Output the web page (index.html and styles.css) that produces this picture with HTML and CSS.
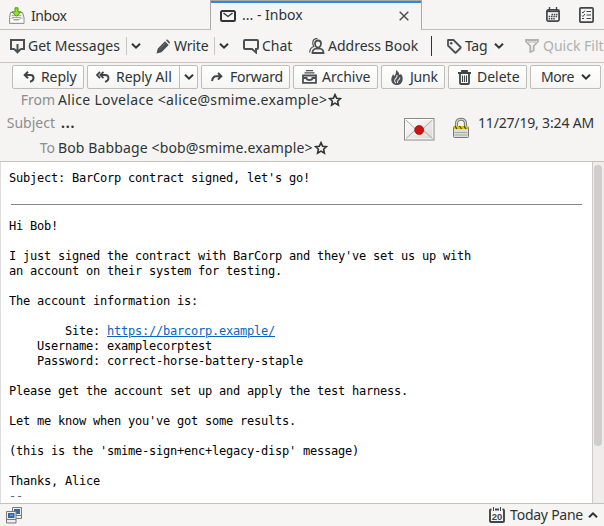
FILE: index.html
```
<!DOCTYPE html>
<html lang="en">
<head>
<meta charset="utf-8">
<title>... - Inbox</title>
<link rel="stylesheet" href="styles.css">
</head>
<body>
<svg class="defs" width="0" height="0">
  <symbol id="chev" viewBox="0 0 10 8"><path d="M1 1.7 5 5.7 9 1.7" fill="none" stroke="#2e3436" stroke-width="2"/></symbol>
  <symbol id="star" viewBox="0 0 14 14"><path d="M7 1.7 8.6 5.2 12.5 5.6 9.6 8.2 10.4 12.1 7 10.1 3.6 12.1 4.4 8.2 1.5 5.6 5.4 5.2Z" fill="none" stroke="#2e3436" stroke-width="1.6"/></symbol>
</svg>
<div class="app">
  <div class="tabs">
    <div class="tab first">
      <svg width="18" height="18" viewBox="0 0 18 18"><path d="M2.500 5.500h12l1.500 5v6H1.500v-6z" fill="#eeeeec" stroke="#888a85"/><path d="M4 8.500h9M4 10.500h9M5 12.500h7" stroke="#a5a7a2"/><path d="M2 11.500h3l1 2h5l1-2h3.500V16H2z" fill="#fff" stroke="#babdb6" stroke-width=".6"/><path d="M7 .8h3v4h3L8.500 9.300 4 4.800h3z" fill="#8ae234" stroke="#4e9a06"/></svg>
      <span>Inbox</span>
    </div>
    <div class="tab active">
      <svg width="16" height="12" viewBox="0 0 16 12"><rect x="1" y="1" width="14" height="10" rx="1.5" fill="none" stroke="#2e3436" stroke-width="2"/><path d="M3.5 3 8 6.5 12.5 3" fill="none" stroke="#2e3436" stroke-width="1.3"/></svg>
      <span>... - Inbox</span>
      <svg class="close" width="10" height="10" viewBox="0 0 10 10"><path d="M.7.7l8.6 8.6M9.3.7.7 9.3" stroke="#4a5053" stroke-width="1.5"/></svg>
    </div>
    <div class="tab-tools">
      <svg width="14" height="15" viewBox="0 0 14 15"><path d="M3.5 0v4M10.500 0v4" stroke="#3f4548" stroke-width="1.3"/><rect x=".9" y="2.800" width="12.200" height="11.300" rx="1.500" fill="none" stroke="#3f4548" stroke-width="1.700"/><path d="M1 4.500h12" stroke="#3f4548" stroke-width="1.300"/><path d="M5.500 7.500h6M2.700 9.600h8.800M2.700 11.700h6.500" stroke="#3f4548" stroke-width="1.500" stroke-dasharray="1.500 .8"/></svg>
      <svg width="15" height="16" viewBox="0 0 15 16"><rect x=".9" y=".9" width="13.200" height="14.200" rx="1" fill="none" stroke="#3f4548" stroke-width="1.700"/><path d="M3 5l1 1 2-2.500M3 8.500l1 1 2-2.500M3 11.500h2M7.500 4.500h4.500M7.500 8h4.500M7.500 11.500h4.500" fill="none" stroke="#3f4548"/></svg>
    </div>
  </div>

  <div class="toolbar">
    <div class="tool get">
      <svg width="15" height="15" viewBox="0 0 15 15"><path d="M4 10H1V1h13v9h-3" fill="none" stroke="#4a5053" stroke-width="2"/><path d="M7.500 5v8M4 9.800l3.500 3.500L11 9.800" fill="none" stroke="#4a5053" stroke-width="2"/></svg>
      <span>Get Messages</span>
    </div>
    <div class="drop"><svg width="10" height="8"><use href="#chev"/></svg></div>
    <div class="tool write">
      <svg width="15" height="15" viewBox="0 0 15 15"><path d="M.5 14.500l1.300-5L9 2.300 12.700 6l-7.200 7.200zM10 1.300l.7-.7c.6-.6 3.700 2.400 3.200 3.300l-.7.9z" fill="#4a5053"/><path d="M3.500 10 10 3.700" stroke="#777c7e" stroke-width=".7"/></svg>
      <span>Write</span>
    </div>
    <div class="drop"><svg width="10" height="8"><use href="#chev"/></svg></div>
    <div class="tool chat">
      <svg width="16" height="15" viewBox="0 0 16 15"><path d="M2 1h12q1 0 1 1v7q0 1-1 1h-1v3.500L9 10H2q-1 0-1-1V2q0-1 1-1z" fill="none" stroke="#4a5053" stroke-width="2"/></svg>
      <span>Chat</span>
    </div>
    <div class="tool book">
      <svg width="16" height="16" viewBox="0 0 16 16"><path d="M9 2.500c2 0 3 1.300 3 3S10.800 9.500 9 9.500 6 7.200 6 5.500s1-3 3-3zM3.500 15c0-3 1.500-4 3.500-4.500h4c2 .5 3.500 1.500 3.500 4.500z" fill="none" stroke="#4a5053" stroke-width="1.800"/><path d="M8.500.6C5 .3 3.700 2.500 3.800 5c0 1.500.3 2.500 1 3.500C2 9.500.7 11 .7 14.500" fill="none" stroke="#4a5053" stroke-width="1.200"/></svg>
      <span>Address Book</span>
    </div>
    <div class="sep"></div>
    <div class="tool tag">
      <svg width="15" height="15" viewBox="0 0 15 15"><path d="M1 1h5.500l7 7q.5.500 0 1l-4.500 4.500q-.5.500-1 0L1 6.500z" fill="none" stroke="#4a5053" stroke-width="1.800" stroke-linejoin="round"/><circle cx="4.200" cy="4.200" r="1.300" fill="#4a5053"/></svg>
      <span>Tag</span>
      <svg class="tagchev" width="10" height="8"><use href="#chev"/></svg>
    </div>
    <div class="tool filter">
      <svg width="14" height="14" viewBox="0 0 14 14"><path d="M1 1h12v1.500L8.700 7v4.500L5.300 13V7L1 2.500z" fill="none" stroke="#b0b2b2" stroke-width="1.800"/><path d="M3 3h8" stroke="#b0b2b2"/></svg>
      <span>Quick Filter</span>
    </div>
  </div>

  <div class="header">
    <div class="buttons">
      <div class="btn reply"><svg width="12" height="12" viewBox="0 0 12 12"><path d="M5 .8 1.700 4 5 7.200M2 4h5.500q3 0 3 3T7 10.800" fill="none" stroke="#3f4548" stroke-width="2"/></svg><span>Reply</span></div>
      <div class="btn all"><svg width="14" height="12" viewBox="0 0 14 12"><path d="M4 .8.900 4 4 7.200M7.500.8 4.300 4l3.200 3.200M5 4h4q3.500 0 3.500 3T9 10.800" fill="none" stroke="#3f4548" stroke-width="1.800"/></svg><span>Reply All</span><i></i><svg class="allchev" width="10" height="8"><use href="#chev"/></svg></div>
      <div class="btn forward"><svg width="12" height="10" viewBox="0 0 12 10"><path d="M7 1l3.300 3.300L7 7.600M10 4.300H5Q2 4.300 1 9" fill="none" stroke="#3f4548" stroke-width="2"/></svg><span>Forward</span></div>
      <div class="btn archive"><svg width="15" height="14" viewBox="0 0 15 14"><path d="M4 .6h7M2.500 2.900h10" stroke="#4a5053" stroke-width="1.200"/><path d="M1 8V5.500h13V8M1 8v4.800h13V8h-3.500c0 1-1 2-3 2s-3-1-3-2z" fill="none" stroke="#4a5053" stroke-width="1.800"/></svg><span>Archive</span></div>
      <div class="btn junk"><svg width="12" height="15" viewBox="0 0 12 15"><path d="M5 0c3 2 3 3.500 3.500 5L10 4c1.500 2 2 4 1.500 6.500C11 13 9 15 6 15s-5.500-2-5.700-5C.2 7.500 1.500 6 2 4l1.200 2C4.500 5 5.300 2.500 5 0z" fill="#4a5053"/><path d="M6 5c.5 2.500-1 3-2 4.500-.8 1.500 0 3 1 3.500M8.800 7.500c.3 1.500-.8 2-1.800 3-.7 1-.5 2-.5 2.500" fill="none" stroke="#e4e4e3" stroke-width="1.100"/></svg><span>Junk</span></div>
      <div class="btn delete"><svg width="13" height="15" viewBox="0 0 13 15"><path d="M0 3h13M4 2.500V1h5v1.500M2 4v9q0 1 1 1h7q1 0 1-1V4" fill="none" stroke="#3f4548" stroke-width="1.800"/><path d="M4.500 5.500v6.500M6.500 5.500v6.500M8.500 5.500v6.500" stroke="#3f4548" stroke-width="1.100"/></svg><span>Delete</span></div>
      <div class="btn more"><span>More</span><svg width="10" height="8"><use href="#chev"/></svg></div>
    </div>
    <div class="details">
      <div class="fields">
        <div class="field from"><label>From</label><span class="who">Alice Lovelace &lt;alice@smime.example&gt;</span><svg width="14" height="14"><use href="#star"/></svg></div>
        <div class="field subject"><label>Subject</label><b>...</b></div>
        <div class="field to"><label>To</label><span class="who bob">Bob Babbage &lt;bob@smime.example&gt;</span><svg width="14" height="14"><use href="#star"/></svg></div>
      </div>
      <div class="security">
        <svg class="sealed" width="31" height="23" viewBox="0 0 31 23"><defs><linearGradient id="env" x2="1" y2="1"><stop stop-color="#fff"/><stop offset="1" stop-color="#d8d8d6"/></linearGradient></defs><rect x=".5" y=".5" width="29.500" height="21.500" fill="#fff" stroke="#888a85"/><path d="M2 2h26.500v18.500H2z" fill="url(#env)"/><path d="M2 2l10.500 10h5L28.500 2M2 20.500l10-9M28.500 20.500l-10-9" fill="none" stroke="#aaaca8"/><circle cx="15.200" cy="12" r="4.500" fill="#cc1414" stroke="#a40000" stroke-width=".7"/></svg>
        <svg class="lock" width="18" height="21" viewBox="0 0 18 21"><path d="M4.500 11V6.500C4.500 .8 13.500 .8 13.500 6.500V11" fill="none" stroke="#777973" stroke-width="3.200"/><path d="M4.500 11V6.500C4.500 .8 13.500 .8 13.500 6.500V11" fill="none" stroke="#d3d7cf" stroke-width="1.200"/><rect x="1.500" y="9.500" width="15" height="11" rx="1" fill="#dcdeda" stroke="#777973"/><path d="M2 10.500h14" stroke="#e3bd16" stroke-width="3"/><path d="M3 9l2 3M7.500 9l2 3M12 9l2 3" stroke="#393b30" stroke-width="1.200"/><path d="M2.500 15.500h13M2.500 18h13" stroke="#a6a8a3"/></svg>
        <span class="date">11/27/19, 3:24 AM</span>
      </div>
    </div>
  </div>

  <div class="message">
    <div class="body"><pre class="subj">Subject: BarCorp contract signed, let's go!</pre><hr><pre>Hi Bob!

I just signed the contract with BarCorp and they've set us up with
an account on their system for testing.

The account information is:

        Site: <a>https://barcorp.example/</a>
    Username: examplecorptest
    Password: correct-horse-battery-staple

Please get the account set up and apply the test harness.

Let me know when you've got some results.

(this is the 'smime-sign+enc+legacy-disp' message)

Thanks, Alice
<span class="sig">--</span></pre></div>
    <div class="scroll"><div class="thumb"></div></div>
  </div>

  <div class="status">
    <svg class="net" width="17" height="17" viewBox="0 0 17 17"><path d="M6.500.500h9v8h-9zM7.500 8.500h8v3h-8z" fill="#eeeeec" stroke="#777b76"/><path d="M8 2h6v5H8z" fill="#3465a4"/><path d="M.500 4.500h9.500v8H.500zM.500 12.500h9.500v3.500H.500z" fill="#eeeeec" stroke="#777b76"/><path d="M2 6h6.500v5H2z" fill="#3465a4"/><path d="M4 7.500h3v1.500H4z" fill="#6b99d0"/></svg>
    <div class="today">
      <svg width="16" height="16" viewBox="0 0 16 16"><path d="M2.500 2.500H2q-1 0-1 1V14q0 1 1 1h12q1 0 1-1V3.500q0-1-1-1h-.5M6 2.500h4" fill="none" stroke="#3f4548" stroke-width="1.900"/><path d="M4.500 0v4M11.500 0v4" stroke="#3f4548"/><text x="8" y="13" text-anchor="middle">20</text></svg>
      <span>Today Pane</span>
      <svg class="up" width="10" height="8" viewBox="0 0 10 8"><path d="M1 6.300 5 2.300 9 6.300" fill="none" stroke="#2e3436" stroke-width="2"/></svg>
    </div>
  </div>
</div>
</body>
</html>
```
FILE: styles.css
```
* { box-sizing: border-box; }
body { margin: 0; overflow: hidden; background: #f6f5f4; color: #2e3436; font: 14px/20px "Noto Sans", sans-serif; }
.defs { display: block; height: 0; }
.app { width: 604px; height: 526px; display: flex; flex-direction: column; overflow: hidden; }
svg { display: block; flex: none; }
span, label { white-space: nowrap; }

.tabs { height: 30px; flex: none; display: flex; }
.tab { display: flex; align-items: center; }
.first { width: 210px; border-bottom: 1px solid #c0bfb9; padding: 2px 0 0 8px; }
.first span { margin-left: 5px; letter-spacing: -.4px; }
.active { width: 212px; border: 1px solid #aaa9a3; border-top: 0; border-bottom: 0; padding: 0 12px 0 9px; background: linear-gradient(#aaa9a3 0 1px, #3584e4 1px 3px, #f6f5f4 3px); }
.active span { margin-left: 6px; }
.active > svg { margin-top: 2px; }
.active .close { margin-left: auto; }
.tab-tools { flex: 1; display: flex; gap: 19px; padding: 7px 0 0 124px; border-bottom: 1px solid #c0bfb9; }

.toolbar { height: 33px; flex: none; display: flex; align-items: center; border-bottom: 1px solid #c9c5b9; }
.tool { display: flex; align-items: center; flex: none; }
.get { width: 126px; padding-left: 10px; }
.get span { margin-left: 3px; }
.drop { width: 23px; height: 18px; border-left: 1px solid #c9c7c2; display: flex; align-items: center; padding-left: 4px; flex: none; }
.write { width: 65px; padding-left: 7px; }
.write span { margin-left: 3px; letter-spacing: -.15px; }
.chat { width: 67px; padding-left: 6px; }
.chat span { margin-left: 3px; }
.book { width: 124px; padding-left: 5px; }
.book span { margin-left: 3px; }
.sep { width: 1px; height: 20px; background: #2e3436; margin-left: 3px; flex: none; }
.tag { width: 93px; padding-left: 15px; }
.tag span { margin-left: 3px; letter-spacing: -.3px; }
.tagchev { margin-left: 7px; }
.filter { color: #aeb0b0; }
.filter span { margin-left: 4px; }

.header { height: 99px; flex: none; border-bottom: 1px solid #c6c2bb; background: #f5f4f2; }
.buttons { display: flex; gap: 3px; padding: 2px 0 0 12px; }
.btn { height: 24px; flex: none; display: flex; align-items: center; border: 1px solid #bfbdb8; border-radius: 2px; background: linear-gradient(#fff, #f5f5f4); }
.btn span { margin-left: 7px; }
.reply { width: 72px; padding-left: 10px; }
.reply span { margin-left: 6px; letter-spacing: -.1px; }
.all { width: 111px; padding-left: 8px; }
.all span { margin-left: 6px; width: 56px; }
.all i { width: 1px; height: 22px; background: #bfbdb8; margin-left: 7px; }
.all .allchev { margin-left: 4px; }
.forward { width: 89px; padding-left: 9px; }
.forward span { letter-spacing: -.25px; }
.archive { width: 85px; padding-left: 8px; }
.archive span { margin-left: 5px; }
.junk { width: 64px; padding-left: 9px; }
.junk span { letter-spacing: -.2px; }
.delete { width: 79px; padding-left: 9px; }
.delete span { margin-left: 6px; }
.more { width: 71px; padding-left: 3px; }
.more span { letter-spacing: -.4px; }
.more svg { margin-left: 7px; }
.details { display: flex; justify-content: space-between; }
.field { display: flex; align-items: center; height: 24px; }
.field label { width: 55px; text-align: right; color: #8b8e8f; margin-right: 3px; }
.who { letter-spacing: .335px; }
.bob { letter-spacing: .13px; }
.field svg { margin-left: 1px; }
.from { height: 22px; }
.subject b { margin-left: 3px; letter-spacing: .8px; }
.to { margin-top: 1px; }
.security { display: flex; }
.sealed { margin-top: 29px; }
.lock { margin: 28px 8px 0 17px; }
.date { margin: 24px 10px 0 0; letter-spacing: -.17px; }

.message { flex: 1; min-height: 0; display: flex; background: #fff; border-left: 1px solid #ddd; }
.body { flex: 1; overflow: hidden; padding: 9px 10px 0 8px; }
pre { margin: 0; font: 12px/15px "DejaVu Sans Mono", monospace; letter-spacing: -.2246px; color: #000; }
hr { height: 1px; border: 0; background: #888; margin: 18px 0 14px 2px; }
a { color: #0b66c2; text-decoration: underline; }
.sig { color: #666; }
.scroll { width: 12px; border-left: 1px solid #cdcac5; background: #eeedec; padding: 3px 2px 0 1px; }
.thumb { width: 8px; height: 281px; border-radius: 4px; background: #cfcecd; }

.status { height: 23px; flex: none; border-top: 1px solid #c2c1bc; display: flex; justify-content: space-between; padding: 0 6px; }
.net { margin-top: 3px; }
.today { display: flex; align-items: center; }
.today span { margin-left: 5px; letter-spacing: -.25px; }
.today text { font: bold 9.500px "Liberation Sans", sans-serif; fill: #3f4548; }
.up { margin-left: 5px; }
```
